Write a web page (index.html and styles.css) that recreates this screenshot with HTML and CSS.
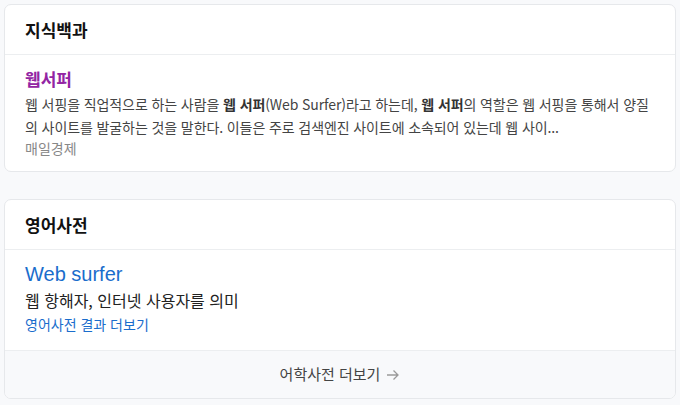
FILE: index.html
```html
<!DOCTYPE html>
<html lang="ko">
<head>
  <meta charset="UTF-8" />
  <title>웹서퍼 검색 결과</title>
  <link rel="stylesheet" href="styles.css">
</head>
<body>

  <div class="card">
    <div class="card-head">지식백과</div>
    <div class="card-body">
      <a class="doc-title" href="#">웹서퍼</a>
      <p class="doc-desc">웹 서핑을 직업적으로 하는 사람을 <b>웹 서퍼</b>(Web Surfer)라고 하는데, <b>웹 서퍼</b>의 역할은 웹 서핑을 통해서 양질의 사이트를 발굴하는 것을 말한다. 이들은 주로 검색엔진 사이트에 소속되어 있는데 웹 사이...</p>
      <div class="doc-source">매일경제</div>
    </div>
  </div>

  <div class="card">
    <div class="card-head">영어사전</div>
    <div class="card-body dict">
      <a class="word" href="#">Web surfer</a>
      <div class="meaning">웹 항해자, 인터넷 사용자를 의미</div>
      <a class="more-link" href="#">영어사전 결과 더보기</a>
    </div>
    <a class="card-foot" href="#">어학사전 더보기
      <svg class="arrow" width="14" height="12" viewBox="0 0 14 12"><path d="M1 6h11M7.5 1.5L12 6l-4.5 4.5" fill="none" stroke="#9a9a9a" stroke-width="1.3"/></svg>
    </a>
  </div>

</body>
</html>
```

FILE: styles.css
```css
body {
  margin: 0;
  padding: 4px;
  background-color: #f8f9fb;
  font-family: "Noto Sans CJK KR", "Noto Sans", sans-serif;
  color: #222;
}
a {
  text-decoration: none;
}
.card {
  background-color: #fff;
  border: 1px solid #e6e8eb;
  border-radius: 7px;
  margin-bottom: 27px;
  overflow: hidden;
}
.card:last-child {
  margin-bottom: 0;
}
.card-head {
  padding: 12px 20px 12px;
  font-size: 17px;
  font-weight: bold;
  line-height: 25px;
  color: #111;
  border-bottom: 1px solid #eceef0;
}
.card-body {
  padding: 12px 20px 13px;
}
.doc-title {
  display: block;
  font-size: 17px;
  font-weight: bold;
  line-height: 24px;
  color: #9324a3;
}
.doc-desc {
  margin: 2px 0 0;
  font-size: 14px;
  line-height: 23px;
  letter-spacing: -0.1px;
  color: #444;
}
.doc-desc b {
  color: #333;
}
.doc-source {
  margin-top: 0;
  font-size: 14px;
  line-height: 19px;
  color: #888;
}
.dict {
  padding: 11px 20px 14px;
}
.word {
  display: block;
  font-family: "Liberation Sans", Arial, sans-serif;
  font-size: 20px;
  line-height: 27px;
  color: #1a6dcc;
}
.meaning {
  font-size: 16px;
  line-height: 24px;
  color: #222;
}
.more-link {
  display: block;
  font-size: 14px;
  line-height: 24px;
  color: #1a6dcc;
}
.card-foot {
  display: flex;
  justify-content: center;
  align-items: center;
  gap: 6px;
  padding: 12px 0 13px;
  font-size: 15px;
  line-height: 22px;
  color: #444;
  background-color: #f8f9fb;
  border-top: 1px solid #eceef0;
}
.arrow {
  margin-top: 1px;
}
```
